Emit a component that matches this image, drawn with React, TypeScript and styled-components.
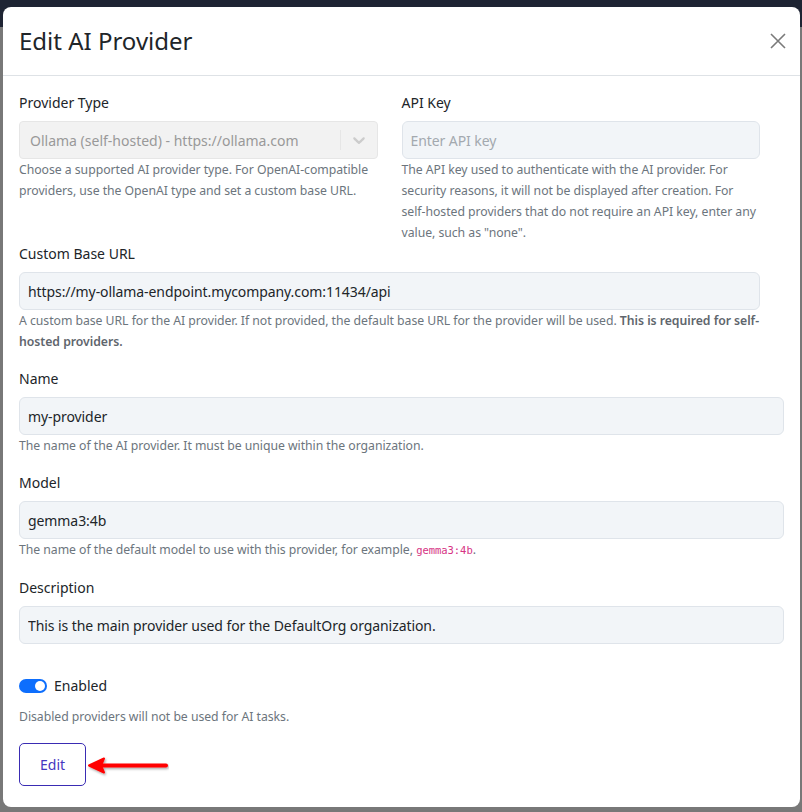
import React from "react";
import styled, { createGlobalStyle } from "styled-components";

const GlobalStyle = createGlobalStyle`
  html, body { margin: 0; padding: 0; }
  body {
    font-family: "Noto Sans", "Open Sans", "DejaVu Sans", sans-serif;
    background: #787878;
    color: #212529;
    width: 802px;
    height: 812px;
    overflow: hidden;
  }
  * { box-sizing: border-box; }
`;

const Page = styled.div`
  position: relative;
  width: 802px;
  height: 812px;
  background: #787878;
`;

const TopBar = styled.div`
  height: 27px;
  background: #1e2433;
`;

const Modal = styled.div`
  position: absolute;
  top: 7px;
  left: 3px;
  width: 797px;
  height: 800px;
  background: #fff;
  border-radius: 8px;
  display: flex;
  flex-direction: column;
  overflow: hidden;
`;

const Header = styled.div`
  display: flex;
  align-items: center;
  justify-content: space-between;
  padding: 16px 14px 16px 16px;
  border-bottom: 1px solid #dee2e6;
`;

const Title = styled.h5`
  margin: 0;
  font-size: 24px;
  line-height: 36px;
  font-weight: 400;
  color: #212529;
`;

const CloseButton = styled.button`
  border: 0;
  background: transparent;
  padding: 0;
  width: 16px;
  height: 16px;
  display: flex;
  align-items: center;
  justify-content: center;
  cursor: pointer;
`;

const Body = styled.div`
  padding: 16px;
  display: flex;
  flex-direction: column;
`;

const TopSection = styled.div`
  display: grid;
  grid-template-columns: 1fr 1fr;
  column-gap: 24px;
  padding-right: 24px;
  margin-bottom: 16px;
`;

const Field = styled.div<{ $span?: boolean; $mb?: number }>`
  display: flex;
  flex-direction: column;
  grid-column: ${(p) => (p.$span ? "1 / -1" : "auto")};
  margin-bottom: ${(p) => p.$mb ?? 0}px;
`;

const Label = styled.label`
  font-size: 14px;
  line-height: 21px;
  margin-bottom: 8px;
  color: #212529;
`;

const Input = styled.input`
  height: 38px;
  width: 100%;
  padding: 0 8px;
  font-family: inherit;
  font-size: 14px;
  letter-spacing: -0.08px;
  color: #212529;
  background: #f2f5f8;
  border: 1px solid #dfe4ea;
  border-radius: 6px;
  outline: none;
  &::placeholder { color: #a3a9af; }
`;

const Help = styled.div`
  font-size: 12.25px;
  line-height: 21px;
  letter-spacing: -0.04px;
  color: #6c757d;
  b { font-weight: 600; color: #5f666d; }
`;

const Code = styled.code`
  font-family: "DejaVu Sans Mono", "Liberation Mono", monospace;
  font-size: 10.5px;
  color: #d63384;
`;

const SelectBox = styled.div`
  display: flex;
  align-items: center;
  height: 38px;
  background: #f2f2f2;
  border: 1px solid #e6e6e6;
  border-radius: 4px;
`;

const SelectValue = styled.div`
  flex: 1;
  padding: 2px 8px;
  margin-left: 2px;
  font-size: 14px;
  color: #999;
  white-space: nowrap;
  overflow: hidden;
`;

const Separator = styled.span`
  align-self: stretch;
  width: 1px;
  margin: 8px 0;
  background: #e6e6e6;
`;

const Indicator = styled.div`
  padding: 8px;
  color: #cccccc;
  display: flex;
`;

const SwitchRow = styled.div`
  display: flex;
  align-items: center;
  gap: 7px;
  margin-top: 31px;
  height: 21px;
`;

const Track = styled.span<{ $on: boolean }>`
  position: relative;
  width: 28px;
  height: 14px;
  border-radius: 7px;
  background: ${(p) => (p.$on ? "#0d6efd" : "#dee2e6")};
`;

const Knob = styled.span<{ $on: boolean }>`
  position: absolute;
  top: 2px;
  left: ${(p) => (p.$on ? "16px" : "2px")};
  width: 10px;
  height: 10px;
  border-radius: 50%;
  background: #fff;
`;

const SwitchLabel = styled.span`
  font-size: 14px;
  line-height: 21px;
  color: #212529;
`;

const SwitchHelp = styled(Help)`
  margin-top: 10px;
`;

const ActionRow = styled.div`
  display: flex;
  align-items: center;
  margin-top: 16px;
`;

const EditButton = styled.button`
  height: 43px;
  padding: 0 20px;
  font-family: inherit;
  font-size: 14px;
  color: #4636c0;
  background: #fff;
  border: 1.5px solid #3a2cb3;
  border-radius: 5px;
  cursor: pointer;
`;

const Arrow = styled.svg`
  margin-left: 1px;
  margin-top: 2px;
`;

export default function App() {
  return (
    <>
      <GlobalStyle />
      <Page>
        <TopBar />
        <Modal>
          <Header>
            <Title>Edit AI Provider</Title>
            <CloseButton aria-label="Close">
              <svg width="16" height="16" viewBox="0 0 16 16">
                <path d="M1 1L15 15M15 1L1 15" stroke="#7a7a7a" strokeWidth="1.6" fill="none" />
              </svg>
            </CloseButton>
          </Header>
          <Body>
            <TopSection>
              <Field>
                <Label>Provider Type</Label>
                <SelectBox>
                  <SelectValue>Ollama (self-hosted) - https://ollama.com</SelectValue>
                  <Separator />
                  <Indicator>
                    <svg width="20" height="20" viewBox="0 0 20 20" fill="currentColor">
                      <path d="M4.516 7.548c0.436-0.446 1.043-0.481 1.576 0l3.908 3.747 3.908-3.747c0.533-0.481 1.141-0.446 1.574 0 0.436 0.445 0.408 1.197 0 1.615-0.406 0.418-4.695 4.502-4.695 4.502-0.217 0.223-0.502 0.335-0.787 0.335s-0.57-0.112-0.789-0.335c0 0-4.287-4.084-4.695-4.502s-0.436-1.17 0-1.615z" />
                    </svg>
                  </Indicator>
                </SelectBox>
                <Help>
                  Choose a supported AI provider type. For OpenAI-compatible providers, use the OpenAI type and set a custom base URL.
                </Help>
              </Field>
              <Field>
                <Label>API Key</Label>
                <Input placeholder="Enter API key" />
                <Help>
                  The API key used to authenticate with the AI provider. For security reasons, it will not be displayed after creation. For self-hosted providers that do not require an API key, enter any value, such as "none".
                </Help>
              </Field>
              <Field $span>
                <Label>Custom Base URL</Label>
                <Input defaultValue="https://my-ollama-endpoint.mycompany.com:11434/api" />
                <Help>
                  A custom base URL for the AI provider. If not provided, the default base URL for the provider will be used. <b>This is required for self-hosted providers.</b>
                </Help>
              </Field>
            </TopSection>
            <Field $mb={16}>
              <Label>Name</Label>
              <Input defaultValue="my-provider" />
              <Help>The name of the AI provider. It must be unique within the organization.</Help>
            </Field>
            <Field $mb={16}>
              <Label>Model</Label>
              <Input defaultValue="gemma3:4b" />
              <Help>
                The name of the default model to use with this provider, for example, <Code>gemma3:4b</Code>.
              </Help>
            </Field>
            <Field>
              <Label>Description</Label>
              <Input defaultValue="This is the main provider used for the DefaultOrg organization." />
            </Field>
            <SwitchRow>
              <Track $on>
                <Knob $on />
              </Track>
              <SwitchLabel>Enabled</SwitchLabel>
            </SwitchRow>
            <SwitchHelp>Disabled providers will not be used for AI tasks.</SwitchHelp>
            <ActionRow>
              <EditButton>Edit</EditButton>
              <Arrow width="82" height="24" viewBox="0 0 82 24">
                <defs>
                  <filter id="sh" x="-10%" y="-30%" width="130%" height="170%">
                    <feDropShadow dx="1" dy="1.5" stdDeviation="1" floodColor="#000" floodOpacity="0.35" />
                  </filter>
                </defs>
                <g filter="url(#sh)">
                  <path d="M79 11.5H14" stroke="#ff0000" strokeWidth="4" strokeLinecap="round" />
                  <path d="M2 11.5L17 4.5L14 11.5L17 18.5Z" fill="#ff0000" stroke="#ff0000" strokeWidth="2" strokeLinejoin="round" />
                </g>
              </Arrow>
            </ActionRow>
          </Body>
        </Modal>
      </Page>
    </>
  );
}
